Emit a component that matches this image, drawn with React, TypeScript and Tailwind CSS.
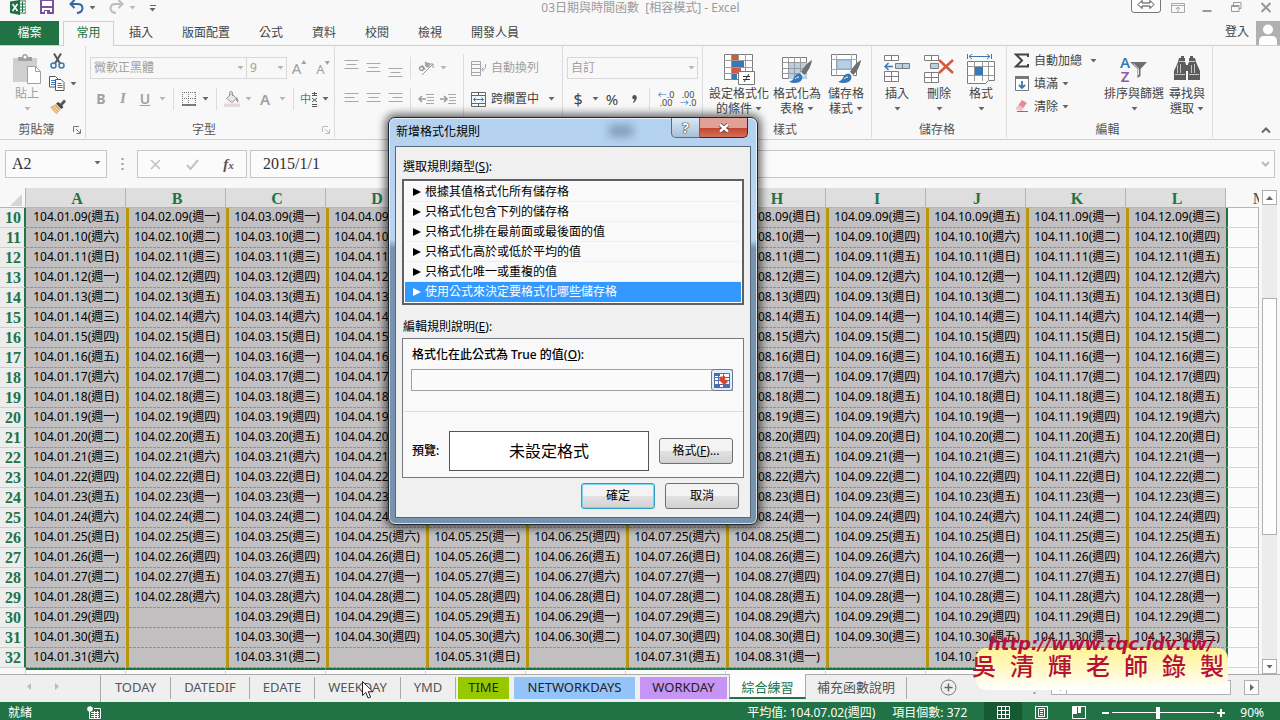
import React from "react";

const WEEK = ["日", "一", "二", "三", "四", "五", "六"];
const COLS = ["A", "B", "C", "D", "E", "F", "G", "H", "I", "J", "K", "L"];
const ROWS = Array.from({ length: 23 }, (_, i) => i + 10);

function cellText(month: number, day: number): string {
  const d = new Date(2015, month, day);
  if (d.getMonth() !== month) return "";
  const mm = String(month + 1).padStart(2, "0");
  const dd = String(day).padStart(2, "0");
  return `104.${mm}.${dd}(週${WEEK[d.getDay()]})`;
}

type Kids = { children?: React.ReactNode };

function Svg({ w, h, children }: { w: number; h: number } & Kids) {
  return (
    <svg width={w} height={h} viewBox={`0 0 ${w} ${h}`} fill="none" className="shrink-0" aria-hidden="true">
      {children}
    </svg>
  );
}

function Caret({ color = "#666" }: { color?: string }) {
  return (
    <Svg w={7} h={4}>
      <path d="M0.5 0h6L3.5 3.5z" fill={color} />
    </Svg>
  );
}

function Tool({ label, wide, children }: { label: string; wide?: boolean } & Kids) {
  return (
    <button
      aria-label={label}
      className={wide ? "flex h-[22px] w-[22px] shrink-0 items-center justify-center" : "flex h-[22px] w-5 shrink-0 items-center justify-center"}
    >
      {children}
    </button>
  );
}

function Drop({ label, color }: { label: string; color?: string }) {
  return (
    <button aria-label={label} className="flex h-[22px] w-3 shrink-0 items-center justify-center">
      <Caret color={color} />
    </button>
  );
}

function Sep() {
  return <span className="mx-[5px] h-[22px] w-px shrink-0 bg-[#dcdcdc]" />;
}

function Launcher({ color = "#777" }: { color?: string }) {
  return (
    <Svg w={8} h={8}>
      <path d="M0.5 6V0.5H6M3 3l4 4M7.5 3.5v4h-4" stroke={color} />
    </Svg>
  );
}

function Group({ label, className, launcher, children }: { label: string; className: string; launcher?: string } & Kids) {
  return (
    <section className={`flex shrink-0 flex-col ${className}`}>
      <div className="flex flex-1 border-r border-[#dcdcdc]">
        <div className="flex min-w-0 flex-1 flex-col">
          <div className="flex flex-1">{children}</div>
          <div className="flex h-4 items-center pr-1">
            <span className="flex-1 text-center leading-4 text-[#555]">{label}</span>
            {launcher && (
              <button aria-label={`${label}設定`}>
                <Launcher color={launcher} />
              </button>
            )}
          </div>
        </div>
      </div>
    </section>
  );
}

function BigButton({ icon, lines, caret = "inline", className }: { icon: React.ReactNode; lines: string[]; caret?: "inline" | "below"; className: string }) {
  return (
    <button className={`flex shrink-0 flex-col items-center pt-[6px] leading-[15px] whitespace-nowrap ${className}`}>
      <span className="flex h-[34px] items-center justify-center">{icon}</span>
      <span>{lines[0]}</span>
      {caret === "below" ? (
        <span className="flex h-[15px] items-center">
          <Caret />
        </span>
      ) : (
        <span className="flex items-center gap-[3px]">
          {lines[1]}
          <Caret />
        </span>
      )}
    </button>
  );
}

function Lines({ kind, top = 0 }: { kind: "t" | "l" | "c" | "r"; top?: number }) {
  const paths = {
    t: `M0.5 ${top + 0.5}h14M2.5 ${top + 4.5}h10M0.5 ${top + 8.5}h14`,
    l: "M0.5 3.5h14M0.5 7.5h10M0.5 11.5h14",
    c: "M0.5 3.5h14M2.5 7.5h10M0.5 11.5h14",
    r: "M0.5 3.5h14M4.5 7.5h10M0.5 11.5h14",
  };
  return (
    <Svg w={15} h={18}>
      <path d={paths[kind]} stroke="#a8a8a8" />
    </Svg>
  );
}

function GridBase({ d }: { d: string }) {
  return <path d={d} stroke="#7d7d7d" fill="#fff" />;
}

function Brush() {
  return (
    <g>
      <path d="M30 6c-4 2-9 8-11 12l3 3c4-3 7-9 8-15z" fill="#6f6f6f" />
      <path d="M18.500 18.500l3.500 3.500" stroke="#f8f8f8" strokeWidth="1.500" />
      <path d="M18 19.500c-3 0-5 1.500-6 4-.8 2-2 3.500-5 4 4 2.500 11 2 13-2 .8-1.800.5-4.500-2-6z" fill="#3a78b5" />
      <path d="M13 25c1-1 2-2 4-2" stroke="#fff" />
    </g>
  );
}

function TitleBar() {
  return (
    <header className="flex h-[21px] shrink-0 items-start text-[#9b9b9b]">
      <div className="flex h-[15px] flex-1 items-center pl-[10px]">
        <Svg w={16} h={15}>
          <path d="M8 1h8v12H8z" fill="#fff" stroke="#217346" />
          <path d="M10 4h5M10 7h5M10 10h5M12.500 2v10" stroke="#217346" />
          <path d="M0 1.500L10 0v15L0 13z" fill="#1e7145" />
          <path d="M2.500 4l5 7M7.500 4l-5 7" stroke="#fff" strokeWidth="1.600" />
        </Svg>
        <button aria-label="儲存" className="ml-[14px]">
          <Svg w={14} h={15}>
            <path d="M1 0h12v13H1z" fill="#fff" stroke="#7b4fa0" strokeWidth="2" />
            <path d="M2 6h10v2H2zM4 10h6v4H4z" fill="#7b4fa0" />
            <path d="M5 11h2v3H5z" fill="#fff" />
          </Svg>
        </button>
        <button aria-label="復原" className="ml-[15px] flex items-center gap-[5px]">
          <Svg w={15} h={15}>
            <path d="M2 4h6c4 0 5.500 2 5.500 4.200S12 12.500 8 13" stroke="#3465a4" strokeWidth="2" />
            <path d="M5.500 0L1.500 4l4 4" stroke="#3465a4" strokeWidth="2" />
          </Svg>
          <Caret />
        </button>
        <button aria-label="重做" className="ml-[13px] flex items-center gap-[5px]">
          <Svg w={15} h={15}>
            <path d="M13 4H7C3 4 1.500 6 1.500 8.200S3 12.500 7 13" stroke="#bdbdbd" strokeWidth="2" />
            <path d="M9.500 0l4 4-4 4" stroke="#bdbdbd" strokeWidth="2" />
          </Svg>
          <Caret color="#bbb" />
        </button>
        <button aria-label="自訂快速存取工具列" className="ml-[13px] flex flex-col items-center gap-0.5 pt-px">
          <span className="h-px w-[6px] bg-[#666]" />
          <Caret />
        </button>
      </div>
      <h1 className="h-[15px] leading-[15px] whitespace-pre">03日期與時間函數  [相容模式] - Excel</h1>
      <div className="flex h-[15px] flex-1 items-center justify-end pr-[9px]">
        <Svg w={30} h={15}>
          <path d="M0.500 -2v12a2.500 2.500 0 0 0 2.500 2.500h24a2.500 2.500 0 0 0 2.500-2.500v-12" fill="#fdfdfd" stroke="#777" />
          <path d="M7 4.500l4-4v2.500h8V.5l4 4-4 4V6h-8v2.500z" fill="#fff" stroke="#444" />
        </Svg>
        <button aria-label="功能區顯示選項" className="ml-[10px]">
          <Svg w={14} h={12}>
            <path d="M0.500 1.500h13v9H.5zM0.500 3.500h13M7 10V5.500M5 7l2-2 2 2" stroke="#a8a8a8" />
          </Svg>
        </button>
        <button aria-label="最小化" className="ml-[17px]">
          <Svg w={10} h={12}>
            <path d="M0.500 9h9" stroke="#999" strokeWidth="2" />
          </Svg>
        </button>
        <button aria-label="還原" className="ml-[19px]">
          <Svg w={11} h={11}>
            <path d="M2.500 3V.5h7.500v6H8M0.500 3.500h7.500v6H.5zM0.500 4.500H8" stroke="#999" />
          </Svg>
        </button>
        <button aria-label="關閉" className="ml-[19px]">
          <Svg w={10} h={11}>
            <path d="M0.500 1l9 9M9.500 1l-9 9" stroke="#999" strokeWidth="2" />
          </Svg>
        </button>
      </div>
    </header>
  );
}

function RibbonTabs() {
  const tabs = ["插入", "版面配置", "公式", "資料", "校閱", "檢視", "開發人員"];
  return (
    <nav className="flex h-[25px] shrink-0 items-stretch border-b border-[#cfcfcf] leading-6 text-[#444]">
      <button className="w-[59px] bg-[#217346] text-white">檔案</button>
      <button className="-mb-px ml-1 w-[51px] border border-b-0 border-[#cfcfcf] bg-[#f8f8f8] pb-[3px] leading-[21px] text-[#217346]">常用</button>
      <div className="ml-px flex gap-px">
        {tabs.map((t) => (
          <button key={t} className="px-[14px]">
            {t}
          </button>
        ))}
      </div>
      <a href="#signin" className="ml-auto pr-[7px] leading-[22px]">
        登入
      </a>
      <span className="flex h-6 w-6 items-end justify-center bg-[#b0b0b0]">
        <Svg w={24} h={24}>
          <circle cx="12" cy="8.500" r="5" fill="#fff" />
          <path d="M3 24v-4c0-3 2-5 5-5h8c3 0 5 2 5 5v4z" fill="#fff" />
        </Svg>
      </span>
    </nav>
  );
}

function Ribbon() {
  return (
    <div className="flex h-[94px] shrink-0 border-b border-[#cfcfcf] pb-px text-[#444]">
      <Group label="剪貼簿" className="w-[86px]" launcher="#777">
        <button className="ml-[9px] flex w-9 flex-col items-center pt-[6px] leading-[15px] text-[#a0a0a0]">
          <span className="flex h-[34px] items-center">
            <Svg w={28} h={31}>
              <path d="M0 4h24v24H0z" fill="#d0d0d0" />
              <path d="M5 3h4c0-4 6-4 6 0h4v4H5z" fill="#a0a0a0" />
              <circle cx="12" cy="3" r="1.500" fill="#fff" />
              <path d="M14.500 12.500h8l5 5v12h-13z" fill="#fff" stroke="#a0a0a0" />
              <path d="M22.500 12.500v5h5" stroke="#a0a0a0" />
            </Svg>
          </span>
          <span>貼上</span>
          <span className="flex h-[15px] items-center">
            <Caret color="#b8b8b8" />
          </span>
        </button>
        <div className="flex flex-col pt-[3px]">
          <button aria-label="剪下" className="flex h-[23px] items-center pl-[5px]">
            <Svg w={15} h={16}>
              <path d="M4 0.500l6 10M11 0.500l-6 10" stroke="#555" strokeWidth="2" />
              <circle cx="3.500" cy="12.500" r="2.500" stroke="#3a78b5" strokeWidth="1.500" />
              <circle cx="11.500" cy="12.500" r="2.500" stroke="#3a78b5" strokeWidth="1.500" />
            </Svg>
          </button>
          <button aria-label="複製" className="flex h-[23px] items-center gap-[5px] pl-1">
            <Svg w={16} h={15}>
              <path d="M0.500 0.500h6l2.500 2.500v8H.5z" fill="#fff" stroke="#555" />
              <path d="M2 4.500h4M2 6.500h4M2 8.500h4" stroke="#3a78b5" />
              <path d="M6.500 3.500h5.500l3 3v8H6.500z" fill="#fff" stroke="#555" />
              <path d="M8.500 7.500h4M8.500 9.500h5M8.500 11.500h5" stroke="#3a78b5" />
            </Svg>
            <Caret />
          </button>
          <button aria-label="複製格式" className="flex h-[23px] items-center pl-[5px]">
            <Svg w={17} h={15}>
              <path d="M0 8l6-3 5 5-4 5c-2-1-5-4-7-7z" fill="#e8b36c" />
              <path d="M2 8.500l5 5M4 7l5 5" stroke="#f7e3c4" />
              <path d="M6 4.500L8.500 3l5 5-2 2z" fill="#444" />
              <path d="M10 5l4-4.500 2 2L12 7z" fill="#555" />
            </Svg>
          </button>
        </div>
      </Group>

      <Group label="字型" className="w-[249px]" launcher="#bbb">
        <div className="flex flex-col gap-[9px] pt-[11px] pl-1 text-[#a0a0a0]">
          <div className="flex">
            <div className="flex h-[22px] w-[157px] items-center border border-[#d8d8d8]">
              <input aria-label="字型名稱" defaultValue="微軟正黑體" className="min-w-0 flex-1 bg-transparent pl-[3px] outline-none" />
              <Drop label="字型清單" color="#b5b5b5" />
            </div>
            <div className="flex h-[22px] w-10 items-center border border-l-0 border-[#d8d8d8]">
              <input aria-label="字型大小" defaultValue="9" className="min-w-0 flex-1 bg-transparent pl-[3px] outline-none" />
              <Drop label="大小清單" color="#b5b5b5" />
            </div>
            <button aria-label="放大字型" className="flex h-[22px] w-6 items-center justify-center">
              <span className="text-[15px] leading-[22px]">A</span>
              <span className="-mt-3 text-[5px]">▲</span>
            </button>
            <button aria-label="縮小字型" className="flex h-[22px] w-6 items-center justify-center">
              <span className="pt-0.5 text-[13px] leading-5">A</span>
              <span className="-mt-3 text-[5px]">▼</span>
            </button>
          </div>
          <div className="flex">
            <Tool label="粗體" wide>
              <b className="text-sm">B</b>
            </Tool>
            <Tool label="斜體" wide>
              <i className="font-['Liberation_Serif',serif] text-[15px] font-bold">I</i>
            </Tool>
            <Tool label="底線" wide>
              <u className="text-sm font-semibold">U</u>
            </Tool>
            <Drop label="底線樣式" color="#b5b5b5" />
            <Sep />
            <Tool label="框線">
              <Svg w={14} h={14}>
                <path d="M0.500 0v14M6.500 0v14M13.500 0v14M0 .5h14M0 6.500h14" stroke="#777" strokeDasharray="1 1" />
                <path d="M0 13h14" stroke="#555" strokeWidth="1.500" />
              </Svg>
            </Tool>
            <Drop label="框線樣式" />
            <Sep />
            <Tool label="填滿色彩">
              <Svg w={16} h={16}>
                <path d="M2.500 7.500l5-5 5 5-4.500 4z" fill="#e8e8e8" stroke="#999" />
                <path d="M5.500 5V2a1.500 1.500 0 0 1 3 0v3" stroke="#999" />
                <path d="M12 6c2 1 3 3 2 6l-2-3z" fill="#999" />
                <path d="M0 12.500h16v3.500H0z" fill="#e6d9dc" />
              </Svg>
            </Tool>
            <Drop label="填滿色彩清單" color="#b5b5b5" />
            <Tool label="字型色彩" wide>
              <span className="text-[15px] font-semibold">A</span>
            </Tool>
            <Drop label="字型色彩清單" color="#b5b5b5" />
            <Sep />
            <Tool label="注音">
              <span className="text-[11px] text-[#3a78b5]">中</span>
              <Svg w={7} h={15}>
                <path d="M1 1.500h5M1 3.500h5M3.500 0v4M1 6l5 4M6 6l-5 4M1 12.500h5M1 14.500h5" stroke="#555" />
              </Svg>
            </Tool>
            <Drop label="注音清單" />
          </div>
        </div>
      </Group>

      <Group label="對齊方式" className="w-[228px]" launcher="#777">
        <div className="flex flex-col gap-[9px] pt-[11px] pl-[5px]">
          <div className="flex">
            <Tool label="靠上對齊" wide>
              <Lines kind="t" top={1} />
            </Tool>
            <Tool label="置中對齊" wide>
              <Lines kind="t" top={4} />
            </Tool>
            <Tool label="靠下對齊" wide>
              <Lines kind="t" top={9} />
            </Tool>
            <span className="mx-1 h-[22px] w-px bg-[#dcdcdc]" />
            <Tool label="方向" wide>
              <Svg w={16} h={16}>
                <path d="M4 15L15 4M15 4h-4M15 4v4" stroke="#999" />
                <circle cx="3.500" cy="8.500" r="2" stroke="#999" strokeWidth="1.300" />
                <path d="M4 5.500l3 4M7 2l3.500 4.500" stroke="#999" strokeWidth="1.300" />
                <circle cx="9.500" cy="5" r="1.800" stroke="#999" strokeWidth="1.300" />
              </Svg>
            </Tool>
            <Drop label="方向清單" color="#b5b5b5" />
          </div>
          <div className="flex">
            <Tool label="靠左" wide>
              <Lines kind="l" />
            </Tool>
            <Tool label="置中" wide>
              <Lines kind="c" />
            </Tool>
            <Tool label="靠右" wide>
              <Lines kind="r" />
            </Tool>
            <span className="mx-1 h-[22px] w-px bg-[#dcdcdc]" />
            <Tool label="減少縮排" wide>
              <Svg w={16} h={12}>
                <path d="M8 1.500h8M9 4.500h7M9 7.500h7M8 10.500h8" stroke="#aaa" />
                <path d="M8 6H1M4 3L1 6l3 3" stroke="#999" strokeWidth="1.500" />
              </Svg>
            </Tool>
            <Tool label="增加縮排" wide>
              <Svg w={16} h={12}>
                <path d="M8 1.500h8M9 4.500h7M9 7.500h7M8 10.500h8" stroke="#aaa" />
                <path d="M0 6h7M4 3l3 3-3 3" stroke="#999" strokeWidth="1.500" />
              </Svg>
            </Tool>
          </div>
        </div>
        <span className="mx-1 mt-2 w-px bg-[#dcdcdc]" />
        <div className="flex flex-col gap-[9px] pt-[11px]">
          <button className="flex h-[22px] items-center gap-[5px] pl-[3px] text-[#a0a0a0]">
            <Svg w={15} h={15}>
              <path d="M0.500 0.500h9v3H.5zM0.500 3.500v11M0.500 7.500h9M0.500 11.500h9v3H.5M9.500 7.500v4M9.500 3.500v4M14.500 3v3.500c0 1.500-1 2-3 2M12.500 6.500l-2 2 2 2" stroke="#a5a5a5" />
            </Svg>
            自動換列
          </button>
          <button className="flex h-[22px] items-center gap-[5px] pl-[3px]">
            <Svg w={15} h={15}>
              <path d="M0.500 0.500h14v14H.5zM0.500 3.500h14M0.500 11.500h14M7.500 0v3.500M7.500 11.500V15" stroke="#666" />
              <path d="M2.500 7.500h10M4.500 5.500l-2 2 2 2M10.500 5.500l2 2-2 2" stroke="#3a78b5" />
            </Svg>
            跨欄置中
            <span className="pl-1">
              <Caret />
            </span>
          </button>
        </div>
      </Group>

      <Group label="數值" className="w-[140px]" launcher="#777">
        <div className="flex min-w-0 flex-1 flex-col gap-[9px] pt-[11px] pr-1 pl-1">
          <div className="flex h-[22px] items-center border border-[#d8d8d8] text-[#a0a0a0]">
            <input aria-label="數值格式" defaultValue="自訂" className="min-w-0 flex-1 bg-transparent pl-[3px] outline-none" />
            <Drop label="數值格式清單" color="#b5b5b5" />
          </div>
          <div className="flex">
            <Tool label="會計數字格式" wide>
              <span className="text-base">$</span>
            </Tool>
            <Drop label="會計數字格式清單" />
            <Tool label="百分比" wide>
              <span className="text-[15px]">%</span>
            </Tool>
            <Tool label="千分位" wide>
              <Svg w={5} h={8}>
                <circle cx="2.500" cy="2.200" r="2.200" fill="#555" />
                <path d="M4.700 2c0 2.500-1 4.500-3.200 6L.8 7.200C2 6 2.500 5 2.500 3.500z" fill="#555" />
              </Svg>
            </Tool>
            <span className="mx-1 h-[22px] w-px bg-[#dcdcdc]" />
            <button aria-label="增加小數位數" className="flex h-[22px] w-[22px] flex-col items-center justify-center pl-0.5 text-[9px] leading-[8px]">
              <span>
                <span className="text-[#3a78b5]">←</span>.0
              </span>
              <span>.00</span>
            </button>
            <button aria-label="減少小數位數" className="flex h-[22px] w-[22px] flex-col items-center justify-center pl-0.5 text-[9px] leading-[8px]">
              <span>.00</span>
              <span>
                <span className="text-[#3a78b5]">→</span>.0
              </span>
            </button>
          </div>
        </div>
      </Group>

      <Group label="樣式" className="w-[169px]">
        <BigButton
          className="ml-[5px] w-[62px]"
          lines={["設定格式化", "的條件"]}
          icon={
            <Svg w={31} h={31}>
              <GridBase d="M0.500 0.500h28v25H.5z" />
              <path d="M7.500 0v26M14.500 0v26M21.500 0v26M0 6.500h29M0 13.500h29M0 19.500h29" stroke="#9a9a9a" />
              <path d="M8 1h6v5H8zM8 14h9v5H8z" fill="#d9573b" />
              <path d="M8 7h12v6H8zM8 20h5v5H8z" fill="#3a78b5" />
              <path d="M14.500 17.500h16v13h-16z" fill="#fff" stroke="#777" />
              <path d="M19 22.500h7M19 25.500h7M25 20l-5 8" stroke="#333" />
            </Svg>
          }
        />
        <BigButton
          className="w-[54px]"
          lines={["格式化為", "表格"]}
          icon={
            <Svg w={31} h={31}>
              <GridBase d="M0.500 3.500h24v21H.5z" />
              <path d="M7 9h18v16H7z" fill="#b9cfe4" />
              <path d="M6.500 3v22M12.500 3v22M18.500 3v22M0 8.500h25M0 14.500h25M0 19.500h25" stroke="#9a9a9a" />
              <Brush />
            </Svg>
          }
        />
        <BigButton
          className="w-[44px]"
          lines={["儲存格", "樣式"]}
          icon={
            <Svg w={31} h={31}>
              <GridBase d="M0.500 0.500h25v21H.5z" />
              <path d="M5.500 0v22M20.500 0v22M0 5.500h26M0 15.500h26" stroke="#aaa" />
              <path d="M6 6h14v9H6z" fill="#b9cfe4" stroke="#8aa9c8" />
              <Brush />
            </Svg>
          }
        />
      </Group>

      <Group label="儲存格" className="w-[135px]">
        <BigButton
          className="ml-1 w-[42px]"
          lines={["插入"]}
          caret="below"
          icon={
            <Svg w={27} h={29}>
              <GridBase d="M0.500 0.500h14v5H.5zM0.500 16.500h14v10H.5z" />
              <path d="M7.500 0v6M7.500 16v11M0 21.500h15" stroke="#7d7d7d" />
              <path d="M11.500 8.500h14v5h-14zM18.500 8.500v5" fill="#b9cfe4" stroke="#7d7d7d" />
              <path d="M1 11.500h8M4.500 8L1 11.500 4.500 15" stroke="#3a78b5" strokeWidth="1.500" />
            </Svg>
          }
        />
        <BigButton
          className="w-[42px]"
          lines={["刪除"]}
          caret="below"
          icon={
            <Svg w={30} h={29}>
              <GridBase d="M0.500 0.500h14v5H.5zM0.500 17.500h14v10H.5z" />
              <path d="M7.500 0v6M7.500 17v11M0 22.500h15" stroke="#7d7d7d" />
              <path d="M6.500 8.500h8v5h-8z" fill="#b9cfe4" stroke="#7d7d7d" />
              <path d="M15 5l14 13M29 5L15 18" stroke="#d9573b" strokeWidth="2.500" />
            </Svg>
          }
        />
        <BigButton
          className="w-[42px]"
          lines={["格式"]}
          caret="below"
          icon={
            <Svg w={29} h={31}>
              <path d="M0.500 0v5M24.500 0v5M2 2.500h21M5 0L2 2.500 5 5M20 0l3 2.500L20 5" stroke="#3a78b5" />
              <GridBase d="M0.500 7.500h27v19h-6l-3 3H.5z" />
              <path d="M7.500 7v20M15.500 7v20M21.500 7v20M0 12.500h28M0 21.500h28" stroke="#9a9a9a" />
              <path d="M8 13h8v8H8z" fill="#3a78b5" />
            </Svg>
          }
        />
      </Group>

      <Group label="編輯" className="w-[206px]">
        <div className="flex w-[96px] flex-col pt-[3px] pl-[7px]">
          <button className="flex h-[23px] items-center gap-1">
            <Svg w={16} h={15}>
              <path d="M14 4V1.500H2L8 7.500 2 13.500h12V11" stroke="#444" strokeWidth="2" />
            </Svg>
            自動加總
            <span className="pl-1">
              <Caret />
            </span>
          </button>
          <button className="flex h-[23px] items-center gap-1">
            <Svg w={16} h={15}>
              <path d="M1.500 0.500h13v14h-13z" fill="#fff" stroke="#777" />
              <path d="M1 0h14v3H1z" fill="#777" />
              <path d="M8 5v7M5 9l3 3 3-3" stroke="#3a78b5" strokeWidth="1.800" />
            </Svg>
            填滿
            <Caret />
          </button>
          <button className="flex h-[23px] items-center gap-1">
            <Svg w={16} h={15}>
              <path d="M8 1l5 3-6 8-5-2.500z" fill="#e58a9b" />
              <path d="M4.500 6l5 3-2.500 3-5-2.500z" fill="#f3c3cb" />
              <path d="M3 12.500h11" stroke="#777" />
            </Svg>
            清除
            <Caret />
          </button>
        </div>
        <BigButton
          className="w-[62px]"
          lines={["排序與篩選"]}
          caret="below"
          icon={
            <span className="flex items-center">
              <span className="flex flex-col text-[15px] leading-[14px] font-semibold">
                <span className="text-[#3a78b5]">A</span>
                <span className="text-[#8a5db0]">Z</span>
              </span>
              <Svg w={18} h={20}>
                <path d="M0 3h17l-6.500 7v7l-3 2v-9z" fill="#6f6f6f" />
                <path d="M3.500 4.500L8.500 10v6" stroke="#ddd" />
              </Svg>
            </span>
          }
        />
        <BigButton
          className="w-[44px]"
          lines={["尋找與", "選取"]}
          icon={
            <Svg w={26} h={26}>
              <path d="M5 2h2V0h3v2h1v4l1 2v16H0v-9l4-9zM15 2h1V0h3v2h2l1 4 4 9v9H14V8l1-2z" fill="#5c5c5c" />
              <path d="M11 9h4v6h-4z" fill="#5c5c5c" />
              <path d="M1 18.500h10M15 18.500h10M5 5.500h6M15 5.500h6M3.500 9v8M6.500 8v9M17.500 9v8M20.500 8v9" stroke="#c4c4c4" />
            </Svg>
          }
        />
      </Group>

      <div className="flex flex-1 items-end justify-end pr-2 pb-[5px]">
        <button aria-label="摺疊功能區">
          <Svg w={11} h={6}>
            <path d="M1 5.500l4-4 4 4" stroke="#666" strokeWidth="2" />
          </Svg>
        </button>
      </div>
    </div>
  );
}

function FormulaBar() {
  return (
    <div className="flex h-12 shrink-0 items-start px-[5px] pt-[10px] font-['Liberation_Serif',serif] text-base text-[#333]">
      <div className="flex h-[28px] w-[102px] items-center border border-[#c6c6c6] bg-[#fbfbfb]">
        <input aria-label="名稱方塊" defaultValue="A2" className="min-w-0 flex-1 bg-transparent pl-[6px] outline-none" />
        <button aria-label="名稱清單" className="pr-[5px] pb-[3px]">
          <Caret />
        </button>
      </div>
      <span className="flex h-[28px] w-[30px] items-center justify-center">
        <Svg w={3} h={12}>
          <path d="M1.500 0v12" stroke="#999" strokeWidth="2" strokeDasharray="2 3" />
        </Svg>
      </span>
      <div className="flex h-[28px] w-[110px] items-center justify-around border border-[#c6c6c6] bg-[#fbfbfb]">
        <button aria-label="取消">
          <Svg w={11} h={11}>
            <path d="M1 1l9 9M10 1l-9 9" stroke="#c2c2c2" strokeWidth="1.500" />
          </Svg>
        </button>
        <button aria-label="輸入">
          <Svg w={13} h={11}>
            <path d="M1 6l3.500 4L12 1" stroke="#c2c2c2" strokeWidth="2" />
          </Svg>
        </button>
        <button aria-label="插入函數" className="text-[15px] leading-5 font-bold text-[#555] italic">
          f<span className="text-[11px]">x</span>
        </button>
      </div>
      <div className="ml-[3px] flex h-[28px] flex-1 items-center border border-[#c6c6c6] bg-[#fbfbfb]">
        <input aria-label="資料編輯列" defaultValue="2015/1/1" className="min-w-0 flex-1 bg-transparent pl-3 outline-none" />
        <button aria-label="展開資料編輯列" className="pr-1">
          <Svg w={9} h={6}>
            <path d="M1 1l3.500 3.500L8 1" stroke="#bbb" strokeWidth="2" />
          </Svg>
        </button>
      </div>
    </div>
  );
}

const CELL =
  "bg-[#c1bfc0] bg-[repeating-linear-gradient(90deg,#b8960f_0_3px,transparent_3px_4px)] bg-[length:100%_1px] bg-bottom bg-no-repeat p-0 pb-0.5 leading-[18px] whitespace-nowrap";

function Sheet() {
  return (
    <div className="flex min-h-0 flex-1">
      <div className="min-w-0 flex-1 overflow-hidden">
        <table className="w-full table-fixed border-separate border-spacing-0 text-center text-black">
          <colgroup>
            <col className="w-[26px]" />
            {COLS.map((c) => (
              <col key={c} />
            ))}
            <col className="w-[33px]" />
          </colgroup>
          <thead>
            <tr className="h-5 font-['Liberation_Serif',serif] text-base leading-[19px] text-[#217346]">
              <th className="border-r border-b border-[#b5b5b5] p-0">
                <span className="flex justify-end pt-[5px] pr-[3px]">
                  <Svg w={12} h={12}>
                    <path d="M12 0v12H0z" fill="#d5d5d5" />
                  </Svg>
                </span>
              </th>
              {COLS.map((c) => (
                <th key={c} className="overflow-hidden border-r border-b border-[#b5b5b5] bg-[#dedede] p-0 pt-0.5 pl-[3px] leading-[17px]">
                  {c}
                </th>
              ))}
              <th className="overflow-hidden border-b border-[#b5b5b5] p-0 pt-0.5 text-right leading-[17px] font-normal text-[#555]">
                <span className="-mr-2">M</span>
              </th>
            </tr>
          </thead>
          <tbody>
            {ROWS.map((r) => (
              <tr key={r} className="h-5">
                <th className="border-r-2 border-b border-r-[#217346] border-b-[#cfcfcf] bg-[#ededed] p-0 pt-px pr-[3px] text-right font-['Liberation_Serif',serif] text-base leading-[18px] text-[#217346]">
                  {r}
                </th>
                {COLS.map((c, m) => (
                  <td key={c} className={m === 0 ? CELL : `border-l-[3px] border-l-[#b8960f] pr-px ${CELL}`}>
                    {cellText(m, r - 1)}
                  </td>
                ))}
                <td className="border-r border-b border-l-2 border-r-[#b5b5b5] border-b-[#d4d4d4] border-l-[#217346] bg-[#fbfbfb] p-0" />
              </tr>
            ))}
            <tr className="h-[10px]">
              <th className="border-r border-[#cfcfcf] p-0" />
              {COLS.map((c) => (
                <td key={c} className="border-t-2 border-r border-t-[#217346] border-r-[#d4d4d4] bg-[#fbfbfb] p-0" />
              ))}
              <td className="border-r border-[#b5b5b5] bg-[#fbfbfb] p-0" />
            </tr>
          </tbody>
        </table>
      </div>
      <div className="flex w-[21px] flex-col items-center pt-[2px]">
        <button aria-label="向上捲動" className="flex h-[15px] w-[15px] items-center justify-center border border-[#b0b0b0] bg-[#fdfdfd]">
          <Svg w={7} h={4}>
            <path d="M0 4h7L3.500 0z" fill="#666" />
          </Svg>
        </button>
        <div className="flex w-[15px] flex-1 flex-col bg-[#ececec]">
          <div className="h-[93px]" />
          <div className="h-[237px] border border-[#b0b0b0] bg-[#fdfdfd]" />
        </div>
        <button aria-label="向下捲動" className="flex h-[15px] w-[15px] items-center justify-center border border-[#b0b0b0] bg-[#fdfdfd]">
          <Caret />
        </button>
      </div>
    </div>
  );
}

const SHEETS = [
  { name: "TODAY", cls: "w-[70px] border-r border-[#ababab]" },
  { name: "DATEDIF", cls: "w-[79px] border-r border-[#ababab]" },
  { name: "EDATE", cls: "w-[65px] border-r border-[#ababab]" },
  { name: "WEEKDAY", cls: "w-[86px] border-r border-[#ababab]" },
  { name: "YMD", cls: "w-[55px] border-r border-[#ababab]" },
  { name: "TIME", cls: "ml-[2px] w-[51px] bg-[#98c800] text-[#222]" },
  { name: "NETWORKDAYS", cls: "ml-[5px] w-[121px] bg-[#94c3f7] text-[#222]" },
  { name: "WORKDAY", cls: "ml-[5px] w-[87px] bg-[#c694f2] text-[#222]" },
];

function SheetTabs() {
  return (
    <div className="flex h-[28px] shrink-0 border-t border-[#ababab] bg-[#efefef] text-[13px] text-[#555]">
      <div className="flex w-[101px] shrink-0 items-center gap-[24px] border-r border-[#ababab] pb-1 pl-[27px]">
        <button aria-label="上一個工作表">
          <Svg w={4} h={7}>
            <path d="M4 0v7L0 3.500z" fill="#bbb" />
          </Svg>
        </button>
        <button aria-label="下一個工作表">
          <Svg w={4} h={7}>
            <path d="M0 0v7l4-3.500z" fill="#bbb" />
          </Svg>
        </button>
      </div>
      {SHEETS.map((s) => (
        <button key={s.name} className={`mt-[2px] mb-[3px] shrink-0 pb-[3px] leading-[18px] ${s.cls}`}>
          {s.name}
        </button>
      ))}
      <button className="-mt-px mb-[3px] ml-[2px] w-[77px] shrink-0 border-x border-b-2 border-x-[#ababab] border-b-[#217346] bg-[#fdfdfd] pt-0.5 leading-5 text-[#217346]">
        綜合練習
      </button>
      <button className="mt-[2px] mb-[3px] w-[101px] shrink-0 border-r border-[#ababab] pb-[3px] leading-[18px]">補充函數說明</button>
      <button aria-label="新增工作表" className="ml-[33px] pb-[2px]">
        <Svg w={17} h={17}>
          <circle cx="8.500" cy="8.500" r="7.500" stroke="#777" />
          <path d="M4.500 8.500h8M8.500 4.500v8" stroke="#666" strokeWidth="1.500" />
        </Svg>
      </button>
      <div className="ml-auto flex items-center pr-[21px] pb-[2px]">
        <Svg w={3} h={12}>
          <path d="M1.500 0v12" stroke="#999" strokeWidth="2" strokeDasharray="2 3" />
        </Svg>
        <button aria-label="向左捲動" className="ml-[15px] flex h-[15px] w-4 items-center justify-center border border-[#b0b0b0] bg-[#fdfdfd]">
          <Svg w={4} h={7}>
            <path d="M4 0v7L0 3.500z" fill="#666" />
          </Svg>
        </button>
        <div className="h-[15px] w-[164px] border border-l-0 border-[#b0b0b0] bg-[#fdfdfd]" />
        <button aria-label="向右捲動" className="ml-[13px] flex h-[15px] w-[15px] items-center justify-center border border-[#b0b0b0] bg-[#fdfdfd]">
          <Svg w={4} h={7}>
            <path d="M0 0v7l4-3.500z" fill="#666" />
          </Svg>
        </button>
      </div>
    </div>
  );
}

function StatusBar() {
  return (
    <footer className="flex h-[18px] shrink-0 items-center bg-[#217346] pt-[3px] pr-4 pl-2 text-white">
      <span>就緒</span>
      <button aria-label="錄製巨集" className="ml-[55px]">
        <Svg w={14} h={13}>
          <path d="M2.500 5v7.500h11v-10H7" stroke="#fff" />
          <path d="M4 6.500h8M4 8.500h8M4 10.500h8M7.500 5v7M10.500 5v7" stroke="#fff" />
          <circle cx="3" cy="3" r="2.800" fill="#fff" />
        </Svg>
      </button>
      <span className="ml-auto">平均值: 104.07.02(週四)</span>
      <span className="ml-[17px]">項目個數: 372</span>
      <button aria-label="標準模式" className="-mt-[3px] ml-[17px] flex h-[18px] w-[38px] items-center justify-center bg-[#155a33] pt-[3px]">
        <Svg w={13} h={13}>
          <path d="M0.500 0.500h12v12H.5zM4.500 0v13M8.500 0v13M0 4.500h13M0 8.500h13" stroke="#fff" />
        </Svg>
      </button>
      <button aria-label="整頁模式" className="ml-[13px]">
        <Svg w={13} h={13}>
          <path d="M0.500 0.500h12v12H.5zM3.500 2.500h6v8h-6zM5 4.500h3M5 6.500h3M5 8.500h3" stroke="#fff" />
        </Svg>
      </button>
      <button aria-label="分頁預覽" className="ml-6">
        <Svg w={14} h={13}>
          <path d="M0.500 0.500h13v12H.5z" stroke="#fff" />
          <path d="M1 1h4v7H1zM6 1h3v6H6z" fill="#fff" />
        </Svg>
      </button>
      <button aria-label="縮小" className="ml-4">
        <Svg w={7} h={8}>
          <path d="M0 4h7" stroke="#fff" strokeWidth="2" />
        </Svg>
      </button>
      <label className="ml-[3px] flex h-3 w-[102px] items-center">
        <span className="sr-only">縮放比例</span>
        <input
          type="range"
          min={0}
          max={100}
          defaultValue={45}
          className="h-3 w-full appearance-none bg-[linear-gradient(#fff,#fff)] bg-[length:100%_1px] bg-center bg-no-repeat [&::-webkit-slider-thumb]:h-3 [&::-webkit-slider-thumb]:w-1 [&::-webkit-slider-thumb]:appearance-none [&::-webkit-slider-thumb]:bg-white"
        />
      </label>
      <button aria-label="放大" className="ml-[3px]">
        <Svg w={8} h={8}>
          <path d="M0 4h8M4 0v8" stroke="#fff" strokeWidth="2" />
        </Svg>
      </button>
      <span className="ml-[15px]">90%</span>
    </footer>
  );
}

const RULES = [
  "根據其值格式化所有儲存格",
  "只格式化包含下列的儲存格",
  "只格式化排在最前面或最後面的值",
  "只格式化高於或低於平均的值",
  "只格式化唯一或重複的值",
  "使用公式來決定要格式化哪些儲存格",
];

const BTN = "h-[26px] w-[74px] rounded-[3px] border bg-linear-to-b from-[#f3f3f3] from-50% via-[#e2e2e2] via-50% to-[#d2d2d2] leading-6";

function RuleDialog() {
  return (
    <div
      role="dialog"
      aria-label="新增格式化規則"
      className="absolute top-[117px] left-[388px] w-[370px] rounded-[7px] border border-[#20262e] bg-linear-to-b from-[#b4d2f0] via-[#b9d4f0] via-30% to-[#7893b0] to-32% px-[6px] pb-[6px] text-black shadow-[0_0_8px_3px_rgba(0,0,0,0.6)] inset-ring inset-ring-white/70"
    >
      <div className="flex h-[28px] items-start">
        <span className="pl-px leading-[27px]">新增格式化規則</span>
        <span className="mt-[7px] mr-[38px] ml-auto h-3 w-6 bg-[#5f7893]/60 blur-xs" />
        <button aria-label="說明" className="flex h-5 w-[29px] items-center justify-center rounded-bl-[5px] border border-t-0 border-[#5c6b7c] bg-linear-to-b from-[#dbe8f5] to-[#a9bfd6] text-sm font-bold text-white [text-shadow:0_0_1px_#222,0_0_1px_#222,0_0_1px_#222]">
          ?
        </button>
        <button aria-label="關閉對話方塊" className="mr-[3px] flex h-5 w-12 items-center justify-center rounded-br-[5px] border border-t-0 border-l-0 border-[#5b1d16] bg-linear-to-b from-[#e2a197] from-50% via-[#c2402c] via-50% to-[#d2705c]">
          <Svg w={12} h={10}>
            <path d="M2 1.500l8 7M10 1.500l-8 7" stroke="#54332e" strokeWidth="4" />
            <path d="M2 1.500l8 7M10 1.500l-8 7" stroke="#fff" strokeWidth="2.500" />
          </Svg>
        </button>
      </div>
      <div className="border border-[#56677a] bg-[#f0f0f0] px-[6px] pb-[8px]">
        <div id="rule-type" className="pt-[10px] pl-px leading-[20px]">
          選取規則類型(<u>S</u>):
        </div>
        <ul role="listbox" aria-labelledby="rule-type" className="mt-[2px] border-2 border-[#5f5f64] bg-white p-px leading-5">
          {RULES.map((r, i) => (
            <li
              key={r}
              role="option"
              aria-selected={i === 5}
              className={
                i === 5
                  ? "flex h-5 items-center gap-1 bg-[#3399ff] pl-[8px] text-white"
                  : "flex h-5 items-center gap-1 border-b border-[#efefef] bg-[#f9f9f9] pl-[8px]"
              }
            >
              <Svg w={8} h={8}>
                <path d="M0 0l8 4-8 4z" fill="currentColor" />
              </Svg>
              {r}
            </li>
          ))}
        </ul>
        <div className="mt-[12px] pl-px leading-5">
          編輯規則說明(<u>E</u>):
        </div>
        <div className="mt-px border border-[#77777f] bg-[#f9f9f9]">
          <label htmlFor="formula" className="block pt-[6px] pl-[9px] leading-5 font-medium">
            格式化在此公式為 True 的值(<u>O</u>):
          </label>
          <div className="mt-1 mr-[10px] ml-[8px] flex h-[22px] border border-[#a0a0a0] bg-white">
            <input id="formula" className="min-w-0 flex-1 bg-[#fafafa] outline-none" />
            <button aria-label="選取範圍" className="-my-px -mr-px flex w-[22px] items-center justify-center rounded-[3px] border border-[#6c7c98] bg-[#e4ecf7]">
              <Svg w={16} h={15}>
                <path d="M0.500 0.500h15v14H.5zM0.500 4.500h15M0.500 7.500h15M0.500 11.500h15M4.500 0v15M9.500 0v15" fill="#fff" stroke="#4a6fb0" />
                <path d="M0 0h6v3H0zM0 12h6v3H0zM10 12h6v3h-6z" fill="#4a6fb0" />
                <path d="M5 4l6-1v3l3 3-4 3-4-4z" fill="#d8452c" />
              </Svg>
            </button>
          </div>
          <hr className="mt-5 border-[#dedede]" />
          <div className="flex items-center pt-[19px] pr-[10px] pb-[6px] pl-[9px]">
            <span className="font-medium">預覽:</span>
            <div className="ml-auto flex h-10 w-[200px] items-center justify-center border border-[#555] bg-white text-base">未設定格式</div>
            <button className={`ml-[10px] border-[#707070] ${BTN}`}>
              格式(<u>F</u>)...
            </button>
          </div>
        </div>
        <div className="mt-[5px] flex justify-end gap-[10px] pr-[5px]">
          <button className={`border-[#2d9fc4] inset-ring inset-ring-[#7fd3ef] ${BTN}`}>確定</button>
          <button className={`border-[#707070] ${BTN}`}>取消</button>
        </div>
      </div>
    </div>
  );
}

function Watermark() {
  return (
    <div className="pointer-events-none absolute right-[52px] bottom-[30px] w-[255px] text-[#b5123a]">
      <div className="relative z-10 -mb-[6px] pl-[15px] font-['DejaVu_Sans',sans-serif] text-lg leading-[20px] font-bold italic">http://www.tqc.idv.tw/</div>
      <div className="ml-[3px] rounded-[10px] bg-linear-to-b from-[#fff394] via-[#fff8c4] to-white">
        <div className="-ml-[4px] flex justify-between pr-1 pb-[6px] text-2xl leading-[36px] font-medium">
          {Array.from("吳清輝老師錄製").map((c) => (
            <span key={c}>{c}</span>
          ))}
        </div>
      </div>
    </div>
  );
}

export default function App() {
  return (
    <div className="relative flex h-screen w-full flex-col overflow-hidden bg-[#f8f8f8] font-['Noto_Sans','Noto_Sans_CJK_TC',sans-serif] text-xs">
      <TitleBar />
      <RibbonTabs />
      <Ribbon />
      <FormulaBar />
      <Sheet />
      <SheetTabs />
      <StatusBar />
      <RuleDialog />
      <Watermark />
      <div className="pointer-events-none absolute top-[681px] left-[362px]">
        <Svg w={12} h={18}>
          <path d="M0.500 0.500v14l3.300-3 2.300 5.500 2.500-1-2.300-5.300h4.700z" fill="#fff" stroke="#222" />
        </Svg>
      </div>
    </div>
  );
}
